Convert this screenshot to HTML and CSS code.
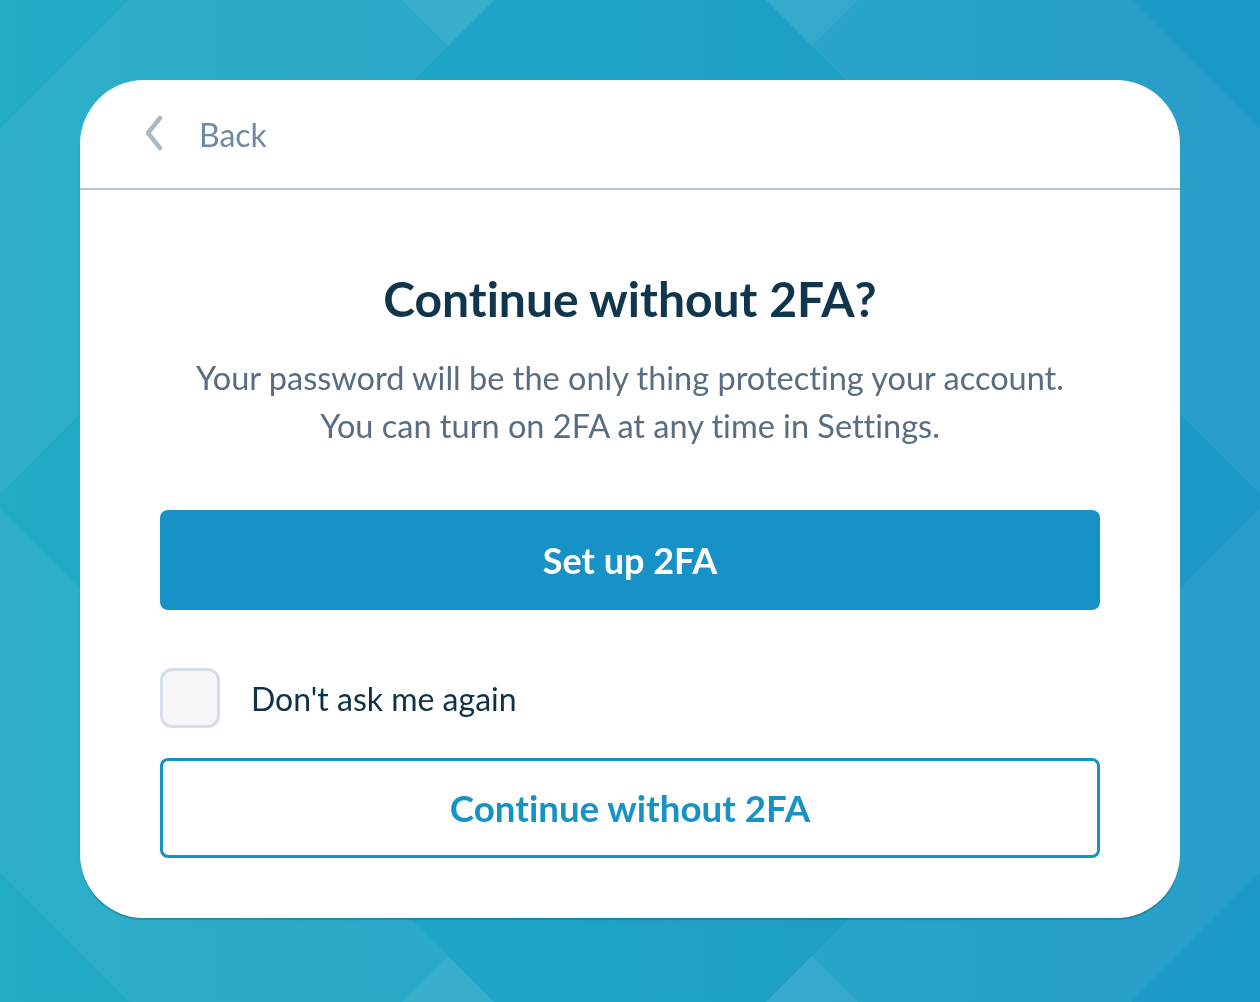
FILE: index.html
```html
<!DOCTYPE html>
<html>
<head>
    <title>Continue without 2FA?</title>
    <link rel="stylesheet" href="styles.css">
</head>
<body>
    <!-- diamond backdrop, left half drawn once and mirrored -->
    <svg class="backdrop" viewBox="0 0 1260 1002" preserveAspectRatio="none">
        <defs>
            <linearGradient id="bgFade" x1="0" y1="0" x2="1" y2="0">
                <stop offset="0" stop-color="#22abc5"/>
                <stop offset="1" stop-color="#1b99c6"/>
            </linearGradient>
            <g id="halfTiles">
                <polygon points="129,0 402,0 448,46 0,494 0,129" fill="#ffffff" fill-opacity="0.055"/>
                <polygon points="402,0 494,0 448,46" fill="#ffffff" fill-opacity="0.11"/>
                <polygon points="129,1002 402,1002 448,956 0,508 0,873" fill="#ffffff" fill-opacity="0.055"/>
                <polygon points="402,1002 494,1002 448,956" fill="#ffffff" fill-opacity="0.11"/>
            </g>
        </defs>
        <rect width="1260" height="1002" fill="url(#bgFade)"/>
        <use href="#halfTiles"/>
        <use href="#halfTiles" transform="translate(1260,0) scale(-1,1)"/>
    </svg>

    <div class="card">
        <div class="card-header">
            <a class="back-link" href="#">
                <svg class="back-icon" viewBox="0 0 24 36" width="24" height="36">
                    <path d="M17 3 L5 18 L17 33" fill="none" stroke="#a9b9c8" stroke-width="4.5" stroke-linecap="round" stroke-linejoin="round"/>
                </svg>
                <span>Back</span>
            </a>
        </div>

        <div class="card-body">
            <h1 class="title">Continue without 2FA?</h1>
            <p class="lead">Your password will be the only thing protecting your account.<br>You can turn on 2FA at any time in Settings.</p>

            <button class="btn btn-primary">Set up 2FA</button>

            <label class="check-row">
                <span class="check-box"></span>
                <span class="check-label">Don't ask me again</span>
            </label>

            <button class="btn btn-outline">Continue without 2FA</button>
        </div>
    </div>
</body>
</html>
```

FILE: styles.css
```css
body {
    margin: 0;
    padding: 80px;
    min-height: 100vh;
    box-sizing: border-box;
    font-family: Lato, 'Open Sans', sans-serif;
    font-variant-ligatures: none;
    background-color: #1fa3c5;
}

.backdrop {
    position: fixed;
    top: 0;
    left: 0;
    width: 100%;
    height: 100%;
    z-index: -1;
}

.card {
    width: 1100px;
    background-color: #ffffff;
    border-radius: 64px;
    box-shadow: 0 2px 1px rgba(0, 0, 0, 0.18);
    overflow: hidden;
}

.card-header {
    height: 108px;
    border-bottom: 2px solid #b9c6d2;
    display: flex;
    align-items: center;
    padding-left: 63px;
}

.back-link {
    display: flex;
    align-items: center;
    gap: 32px;
    text-decoration: none;
    color: #6f89a4;
    font-size: 32px;
}

.back-icon {
    display: block;
    margin-top: -2px;
}

.card-body {
    padding: 81px 80px 60px;
    display: flex;
    flex-direction: column;
}

.title {
    margin: 0;
    text-align: center;
    font-size: 48px;
    line-height: 56px;
    font-weight: 700;
    color: #0f364d;
}

.lead {
    margin: 27px 0 60px;
    text-align: center;
    font-size: 32.5px;
    line-height: 48px;
    color: #586d82;
}

.btn {
    height: 100px;
    width: 100%;
    border-radius: 8px;
    font-family: Lato, 'Open Sans', sans-serif;
    font-variant-ligatures: none;
    font-size: 36px;
    font-weight: 700;
    cursor: pointer;
}

.btn-primary {
    border: none;
    background-color: #1792c6;
    color: #ffffff;
}

.btn-outline {
    border: 3px solid #1792c6;
    background-color: #ffffff;
    color: #1792c6;
    font-size: 36.7px;
}

.check-row {
    display: flex;
    align-items: center;
    gap: 31px;
    margin: 58px 0 30px;
    cursor: pointer;
}

.check-box {
    width: 60px;
    height: 60px;
    box-sizing: border-box;
    border: 3px solid #d5dee7;
    border-radius: 12px;
    background-color: #f6f6f6;
}

.check-label {
    font-size: 32px;
    color: #0f3147;
}
```
